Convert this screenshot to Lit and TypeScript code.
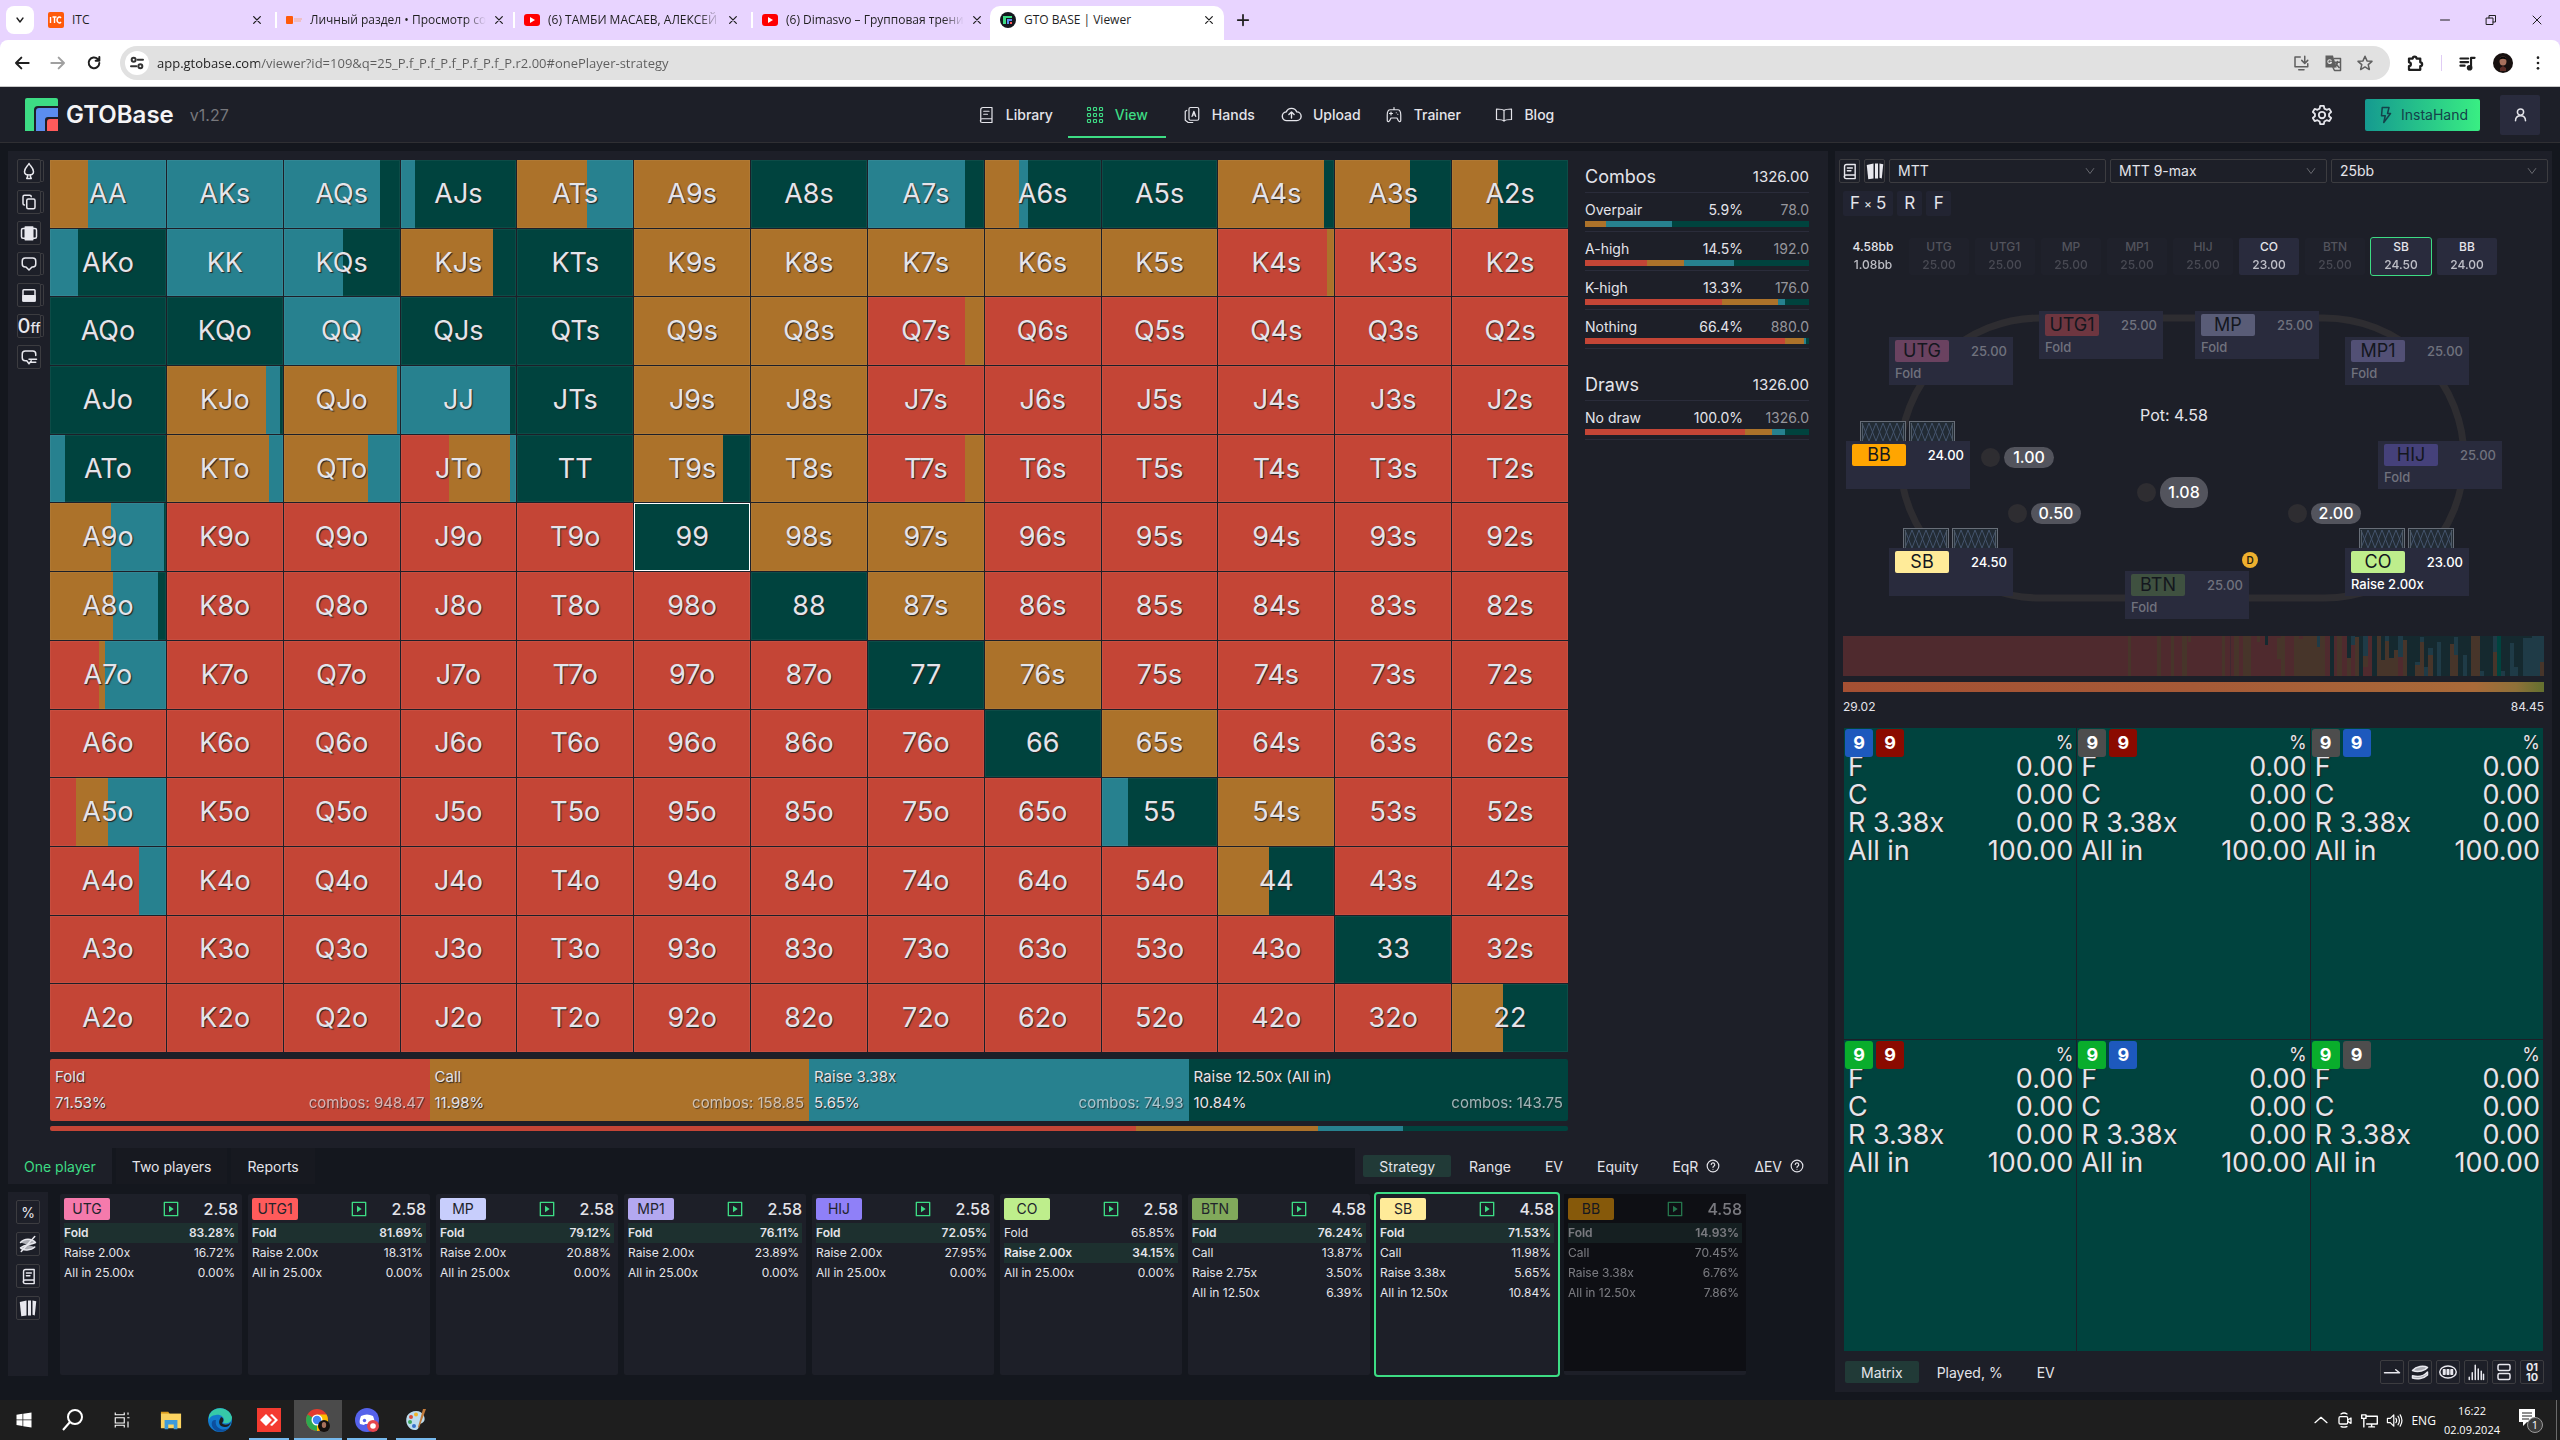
import { LitElement, html, svg, css, nothing } from "lit";
import { customElement, property, state } from "lit/decorators.js";
import { classMap } from "lit/directives/class-map.js";
import { styleMap } from "lit/directives/style-map.js";

const COLORS: Record<string, string> = {
  r: "#c44536",
  o: "#ac722a",
  t: "#27818f",
  g: "#00433e",
};

type Mix = [string, number][];

const mixGradient = (mix: Mix) => {
  let at = 0;
  const stops = mix.map(([c, w]) => {
    const from = at;
    at += w;
    return `${COLORS[c]} ${from}% ${at}%`;
  });
  return `linear-gradient(90deg, ${stops.join(", ")})`;
};

const RANKS = "AKQJT98765432";
const BASE = [
  "otttoogtggoog",
  "gttogooooorrr",
  "ggtggoorrrrrr",
  "gootgoorrrrrr",
  "gooogoorrrrrr",
  "orrrrgoorrrrr",
  "orrrrrgorrrrr",
  "rrrrrrrgorrrr",
  "rrrrrrrrgorrr",
  "rrrrrrrrrgorr",
  "rrrrrrrrrrgrr",
  "rrrrrrrrrrrgr",
  "rrrrrrrrrrrrg",
];
const MIXED: Record<string, Mix> = {
  AA: [["o", 33], ["t", 67]],
  AQs: [["t", 83], ["g", 17]],
  AJs: [["t", 12], ["g", 88]],
  ATs: [["o", 60], ["t", 40]],
  A7s: [["t", 84], ["g", 16]],
  A6s: [["o", 29], ["t", 8], ["g", 63]],
  A4s: [["o", 91], ["g", 9]],
  A3s: [["o", 65], ["g", 35]],
  A2s: [["o", 40], ["g", 60]],
  AKo: [["t", 24], ["g", 76]],
  KQs: [["t", 51], ["g", 49]],
  KJs: [["o", 80], ["g", 20]],
  K4s: [["r", 94], ["o", 6]],
  Q7s: [["r", 84], ["o", 16]],
  KJo: [["o", 85], ["t", 12], ["g", 3]],
  QJo: [["o", 97], ["t", 3]],
  JJ: [["t", 95], ["g", 5]],
  ATo: [["t", 13], ["g", 87]],
  KTo: [["o", 88], ["t", 12]],
  QTo: [["o", 72], ["t", 28]],
  JTo: [["r", 42], ["o", 53], ["t", 5]],
  T9s: [["o", 77], ["g", 23]],
  T7s: [["r", 84], ["o", 16]],
  A9o: [["o", 53], ["t", 45], ["g", 2]],
  A8o: [["o", 54], ["t", 39], ["g", 7]],
  A7o: [["r", 42], ["o", 5], ["t", 53]],
  A5o: [["r", 22], ["o", 28], ["t", 50]],
  A4o: [["r", 77], ["t", 23]],
  "55": [["t", 23], ["g", 77]],
  "44": [["o", 44], ["g", 56]],
  "22": [["o", 44], ["g", 56]],
};

const icon = (body: unknown, size = 20, w = 2) => html`<svg
  width=${size}
  height=${size}
  viewBox="0 0 24 24"
  fill="none"
  stroke="currentColor"
  stroke-width=${w}
  stroke-linecap="round"
  stroke-linejoin="round"
  aria-hidden="true"
>
  ${body}
</svg>`;

const I = {
  book: svg`<path d="M5 20V5a3 3 0 0 1 3-3h12v20H7a2.500 2.500 0 0 1 0-5h13M9 7h7M9 11h5"/>`,
  cards: svg`<g fill="currentColor" stroke="none"><path d="M1 4l9-2v20l-7 1z"/><path d="M12 2h4v20h-4z"/><path d="M18 2l5 1-2 19-3-1z"/></g>`,
  spade: svg`<path d="M12 2c2 4 6 6 6 11a4 4 0 0 1-5 4l2 5H9l2-5a4 4 0 0 1-5-4c0-5 4-7 6-11z"/>`,
  copy: svg`<rect x="9" y="8" width="11" height="13" rx="2"/><path d="M6 16a2 2 0 0 1-2-2V5a2 2 0 0 1 2-2h7a2 2 0 0 1 2 2"/>`,
  carousel: svg`<rect x="2" y="6" width="20" height="13" rx="2"/><rect x="7" y="4" width="10" height="17" fill="currentColor"/>`,
  comment: svg`<path d="M7 4h10a4 4 0 0 1 4 4v4a4 4 0 0 1-4 4h-1l-4 4-4-4H7a4 4 0 0 1-4-4V8a4 4 0 0 1 4-4z"/>`,
  half: svg`<rect x="4" y="5" width="16" height="15" rx="1"/><path d="M4 13h16v7H4z" fill="currentColor"/>`,
  commentMinus: svg`<path d="M12 21l-3-4H7a4 4 0 0 1-4-4V8a4 4 0 0 1 4-4h10a4 4 0 0 1 4 4v2M12 21l3-4M12 15h10M14 19h7"/>`,
  grid: svg`${[4, 12, 20].map((x) => [4, 12, 20].map((y) => svg`<rect x=${x - 2} y=${y - 2} width="4" height="4" rx="1"/>`))}`,
  hands: svg`<rect x="8" y="2" width="13" height="17" rx="2"/><path d="M5 6L3 7v12l4 3h6M12 14l2.500-7 2.500 7M13 12h3"/>`,
  upload: svg`<path d="M7 19a5 5 0 0 1-1-10 6.500 6.500 0 0 1 12 0 5 5 0 0 1 0 10zM12 16v-6M9 12l3-3 3 3"/>`,
  trainer: svg`<path d="M7 5h10c3 0 4 3 4 7v7c0 3-3 2-4-1l-1-2H8l-1 2c-1 3-4 4-4 1v-7c0-4 1-7 4-7zM8 8v4M6 10h4M15 9h.1M17 11h.1M12 2v3"/>`,
  blog: svg`<path d="M12 6c-2-2-6-2-10-2v14c4 0 8 0 10 2 2-2 6-2 10-2V4c-4 0-8 0-10 2zM12 6v14"/>`,
  gear: svg`<circle cx="12" cy="12" r="3.500"/><path d="M10 2h4l.6 3 2.400 1.300 3-1 2 3.500-2.300 2v2.500l2.300 2-2 3.400-3-1-2.400 1.400L14 22h-4l-.6-2.900L7 17.700l-3 1-2-3.400 2.300-2v-2.500L2 8.800l2-3.500 3 1L9.400 5z"/>`,
  bolt: svg`<path d="M7 2h9l-2 8h4L9 22l2-9H6z"/>`,
  user: svg`<circle cx="12" cy="8" r="5"/><path d="M4 22c0-6 4-8 8-8s8 2 8 8"/>`,
  eyeOff: svg`<path d="M2 10c5-6 15-6 20 0-6 3-14 3-20 7 3 4 14 4 19-1" fill="currentColor" fill-opacity=".7"/><path d="M3 22L21 2"/>`,
  play: svg`<rect x="2" y="2" width="20" height="20"/><path d="M9 7l7 5-7 5z" fill="currentColor" stroke="none"/>`,
  arrow: svg`<path d="M2 13h20l-5-4"/>`,
  chips: svg`<path d="M2 10c5-6 15-7 20-4-3 4-12 7-20 4zM2 17c8 2 16 0 20-5v4c-5 5-14 6-20 4z" fill="currentColor" fill-opacity=".7"/>`,
  oval: svg`<ellipse cx="12" cy="12" rx="11" ry="8"/><rect x="6" y="9" width="2" height="6" fill="currentColor"/><rect x="11" y="9" width="2" height="6" fill="currentColor"/><rect x="16" y="9" width="2" height="6" fill="currentColor"/>`,
  bars: svg`<path d="M3 22v-3M7 22V13M11 22V3M15 22V8M19 22V11M22 22v-7"/>`,
  rows: svg`<rect x="4" y="2" width="16" height="8" rx="2"/><rect x="4" y="14" width="16" height="8" rx="2"/>`,
  down: svg`<path d="M3 6l9 12 9-12"/>`,
  close: svg`<path d="M4 4l16 16M20 4L4 20"/>`,
  plus: svg`<path d="M12 3v18M3 12h18"/>`,
  back: svg`<path d="M22 12H3M11 4l-8 8 8 8"/>`,
  forward: svg`<path d="M2 12h19M13 4l8 8-8 8"/>`,
  reload: svg`<path d="M20 12a8 8 0 1 1-2.500-6L20 8.500M20 3v5.500h-5.500"/>`,
  tune: svg`<circle cx="7" cy="7" r="3"/><path d="M13 7h8M3 17h8"/><circle cx="17" cy="17" r="3"/>`,
  install: svg`<path d="M11 4H4v13h17v-4M9 21h7M17 3v9M13 8.500l4 4 4-4"/>`,
  translate: svg`<path d="M2 2h10l5 16H2z" fill="currentColor" stroke="none"/><path d="M14 6h8v16h-8l-2-4M15 11h6M18 10c0 3-1 5-4 7M16 13l4 5"/><path d="M9.500 8.500A2.500 2.500 0 1 0 10 11H8" stroke="#e1e1e1" stroke-width="1.500"/>`,
  star: svg`<path d="M12 3l2.700 6.200 6.600.6-5 4.400 1.500 6.500L12 17.300l-5.800 3.400 1.500-6.500-5-4.400 6.600-.6z"/>`,
  puzzle: svg`<path d="M4 6h5a2.500 2.500 0 0 1 5 0h5v5a2.500 2.500 0 0 1 0 5v5H4v-5a2.500 2.500 0 0 0 0-5z"/>`,
  music: svg`<path d="M2 5h11M2 10h11M2 15h6M17 17V4h5" /><circle cx="15" cy="18" r="2.500" fill="currentColor"/>`,
  dots: svg`<g fill="currentColor" stroke="none"><circle cx="12" cy="4" r="2"/><circle cx="12" cy="12" r="2"/><circle cx="12" cy="20" r="2"/></g>`,
  minimize: svg`<path d="M3 12h18"/>`,
  restore: svg`<path d="M3 8h13v13H3zM8 8V3h13v13h-5"/>`,
  help: svg`<circle cx="12" cy="12" r="10"/><path d="M9 9.500a3 3 0 1 1 4 3c-1 .5-1 1-1 2M12 17.500v.1"/>`,
};

const base = css`
  :host {
    display: block;
    box-sizing: border-box;
    font-family: Inter, "Liberation Sans", sans-serif;
    font-optical-sizing: none;
    color: #e4e4ea;
  }
  * {
    box-sizing: border-box;
  }
  svg {
    display: block;
    flex: none;
  }
  button {
    font: inherit;
    color: inherit;
    background: none;
    border: 0;
    padding: 0;
    margin: 0;
  }
  a {
    color: inherit;
    text-decoration: none;
  }
  table {
    border-collapse: collapse;
    width: 100%;
  }
  td,
  th {
    padding: 0;
    font-weight: inherit;
    text-align: left;
  }
  .num {
    text-align: right;
  }
  .tool {
    width: 24px;
    height: 24px;
    display: grid;
    place-items: center;
    border: 1px solid #3c3c40;
    border-radius: 2px;
    color: #e8e8ee;
  }
`;

@customElement("browser-bar")
export class BrowserBar extends LitElement {
  static styles = [
    base,
    css`
      :host {
        background: #e8d4ff;
        color: #1f1f1f;
        font-family: "Open Sans", "Noto Sans", sans-serif;
      }
      .tabs {
        display: flex;
        height: 40px;
        align-items: center;
        padding-left: 6px;
      }
      .search {
        width: 28px;
        height: 28px;
        background: #fff;
        border-radius: 8px;
        display: grid;
        place-items: center;
        margin-right: 4px;
      }
      .tab {
        width: 238px;
        height: 34px;
        display: flex;
        align-items: center;
        gap: 8px;
        padding: 0 14px 0 10px;
        font-size: 12px;
        line-height: 16px;
      }
      .tab.active {
        background: #fff;
        align-self: flex-end;
        border-radius: 10px 10px 0 0;
        width: 234px;
        padding: 0 10px 6px;
      }
      .tab .label {
        flex: 1;
        white-space: nowrap;
      }
      .tab.cut .label {
        mask-image: linear-gradient(90deg, #000 88%, transparent);
      }
      .sep {
        width: 2px;
        height: 16px;
        margin: 0 -1px;
        background: #fff;
      }
      .new {
        margin-left: 12px;
      }
      .win {
        margin-left: auto;
        display: flex;
        gap: 34px;
        padding-right: 17px;
      }
      .nav {
        height: 46px;
        background: #fff;
        border-radius: 8px 8px 0 0;
        display: flex;
        align-items: center;
        padding: 0 14px;
      }
      .moves {
        display: flex;
        gap: 20px;
        width: 106px;
      }
      .fade {
        color: #a0a0a0;
      }
      .url {
        flex: 1;
        height: 34px;
        display: flex;
        align-items: center;
        gap: 8px;
        background: #e1e1e1;
        border-radius: 17px;
        padding: 0 16px 0 5px;
        color: #5f5f5f;
      }
      .site {
        width: 24px;
        height: 24px;
        border-radius: 12px;
        background: #fff;
        display: grid;
        place-items: center;
        color: #333;
      }
      .url input {
        flex: 1;
        min-width: 0;
        border: 0;
        padding: 0;
        outline: 0;
        font: 13px/20px "Open Sans", "Noto Sans", sans-serif;
        color: transparent;
        background: linear-gradient(90deg, #1f1f1f 102px, #5c5c5c 102px);
        background-clip: text;
        -webkit-background-clip: text;
      }
      .marks {
        display: flex;
        gap: 14px;
      }
      .ext {
        display: flex;
        align-items: center;
        gap: 17px;
        padding-left: 16px;
      }
      .bar {
        width: 1px;
        height: 16px;
        background: #e0ccf5;
      }
      .rule {
        height: 1px;
        background: #c8c8c8;
      }
    `,
  ];

  private fav(kind: string) {
    if (kind === "itc")
      return html`<svg width="16" height="16" viewBox="0 0 16 16">
        <rect width="16" height="16" rx="2" fill="#ff5a0a" />
        <path d="M2.500 5v6M4.500 5h4M6.500 5v6M13 6a2.200 3 0 1 0 0 4" stroke="#fff" stroke-width="1.400" fill="none" />
      </svg>`;
    if (kind === "lk")
      return html`<svg width="16" height="16" viewBox="0 0 16 16">
        <rect y="4" width="7" height="8" rx="1" fill="#ff5a0a" />
        <path d="M8 7h8M8 9h7" stroke="#f7a98c" />
      </svg>`;
    if (kind === "yt")
      return html`<svg width="16" height="16" viewBox="0 0 16 16">
        <rect y="2" width="16" height="12" rx="3" fill="#f00" />
        <path d="M6 5l5 3-5 3z" fill="#fff" />
      </svg>`;
    return html`<svg width="16" height="16" viewBox="0 0 16 16">
      <circle cx="8" cy="8" r="8" fill="#14171e" />
      <path d="M3 12V4h9v2H6v6z" fill="#3ddc84" />
      <path d="M7 12V7h5v2H9v3z" fill="#5b8def" />
      <path d="M10 10h2v2h-2z" fill="#ff5b5b" />
    </svg>`;
  }

  render() {
    const tabs = [
      ["itc", "ITC"],
      ["lk", "Личный раздел • Просмотр со"],
      ["yt", "(6) ТАМБИ МАСАЕВ, АЛЕКСЕЙ"],
      ["yt", "(6) Dimasvo – Групповая трени"],
      ["gto", "GTO BASE | Viewer"],
    ];
    return html`
      <div class="tabs">
        <button class="search" aria-label="Search tabs">${icon(I.down, 8, 4)}</button>
        ${tabs.map(
          ([k, t], i) => html`<div class=${classMap({ tab: true, active: i === 4, cut: i > 0 && i < 4 })}>
              ${this.fav(k)}<span class="label">${t}</span>
              <button aria-label="Close tab">${icon(I.close, 10, 3)}</button>
            </div>
            ${i < 3 ? html`<span class="sep"></span>` : nothing}`,
        )}
        <button class="new" aria-label="New tab">${icon(I.plus, 14, 3)}</button>
        <div class="win">
          <button aria-label="Minimize">${icon(I.minimize, 12, 2)}</button>
          <button aria-label="Restore">${icon(I.restore, 12, 2)}</button>
          <button aria-label="Close">${icon(I.close, 12, 2)}</button>
        </div>
      </div>
      <div class="nav">
        <div class="moves">
          <button aria-label="Back">${icon(I.back, 16, 3)}</button>
          <button class="fade" aria-label="Forward">${icon(I.forward, 16, 3)}</button>
          <button aria-label="Reload">${icon(I.reload, 16, 3)}</button>
        </div>
        <div class="url">
          <button class="site" aria-label="Site information">${icon(I.tune, 16, 3)}</button>
          <input
            aria-label="Address"
            spellcheck="false"
            .value=${"app.gtobase.com/viewer?id=109&q=25_P.f_P.f_P.f_P.f_P.f_P.r2.00#onePlayer-strategy"}
          />
          <div class="marks">
            <button aria-label="Install">${icon(I.install, 18, 2)}</button>
            <button aria-label="Translate">${icon(I.translate, 18, 2)}</button>
            <button aria-label="Bookmark">${icon(I.star, 18, 2)}</button>
          </div>
        </div>
        <div class="ext">
          <button aria-label="Extensions">${icon(I.puzzle, 18, 3)}</button>
          <span class="bar"></span>
          <button aria-label="Media">${icon(I.music, 17, 3)}</button>
          <button aria-label="Profile">
            <svg width="20" height="20" viewBox="0 0 20 20">
              <circle cx="10" cy="10" r="10" fill="#17100f" />
              <ellipse cx="10" cy="8" rx="3.500" ry="4.500" fill="#a8705c" />
              <path d="M6 8c0-6 8-6 8 0-1-3-7-3-8 0z" fill="#080606" />
              <path d="M7 15l3-2 3 2v3H7z" fill="#5c2c26" />
            </svg>
          </button>
          <button aria-label="Menu">${icon(I.dots, 16, 2)}</button>
        </div>
      </div>
      <div class="rule"></div>
    `;
  }
}

@customElement("site-header")
export class SiteHeader extends LitElement {
  static styles = [
    base,
    css`
      header {
        height: 56px;
        background: #1d1f28;
        border-bottom: 1px solid #2f2f33;
        display: flex;
        justify-content: space-between;
        align-items: center;
        padding: 0 20px 0 25px;
      }
      .brand {
        display: flex;
        align-items: center;
        gap: 8px;
      }
      .name {
        font-size: 24px;
        line-height: 32px;
        font-weight: 600;
        color: #f4f4f6;
      }
      .ver {
        font-size: 16px;
        color: #77777c;
        margin-left: 8px;
      }
      nav {
        display: flex;
        gap: 4px;
        height: 100%;
      }
      nav a {
        width: 98px;
        display: flex;
        justify-content: center;
        align-items: center;
        gap: 11px;
        font-size: 14px;
        font-weight: 500;
        margin-bottom: 4px;
        border-bottom: 2px solid transparent;
        padding-top: 6px;
      }
      nav a.on {
        color: #3ddc84;
        border-color: #3ddc84;
      }
      .right {
        display: flex;
        align-items: center;
      }
      .insta {
        width: 115px;
        height: 32px;
        display: flex;
        justify-content: center;
        align-items: center;
        gap: 6px;
        margin: 0 20px 0 32px;
        border-radius: 2px;
        background: linear-gradient(90deg, #159a90, #39ee83);
        color: #14424a;
        font-size: 14px;
      }
      .user {
        width: 40px;
        height: 40px;
        background: #292b3d;
        border-radius: 2px;
        display: grid;
        place-items: center;
      }
    `,
  ];
  render() {
    const items: [string, unknown][] = [
      ["Library", I.book],
      ["View", I.grid],
      ["Hands", I.hands],
      ["Upload", I.upload],
      ["Trainer", I.trainer],
      ["Blog", I.blog],
    ];
    return html`<header>
      <div class="brand">
        <svg width="33" height="33" viewBox="0 0 33 33">
          <path d="M2 0h29a2 2 0 0 1 2 2v6H13q-4 0-4 4v21H0V2a2 2 0 0 1 2-2z" fill="#3ddc84" />
          <path d="M11 33V13q0-3 3-3h19v9H23q-3 0-3 3v11z" fill="#5b8def" />
          <path d="M22 33V24q0-3 3-3h8v12z" fill="#ff5b5b" />
        </svg>
        <span class="name">GTOBase</span><span class="ver">v1.27</span>
      </div>
      <nav>
        ${items.map(([t, i]) => html`<a href="#${t}" class=${t === "View" ? "on" : ""}>${icon(i, t === "Upload" ? 21 : 18, 1.6)}${t}</a>`)}
      </nav>
      <div class="right">
        <button aria-label="Settings">${icon(I.gear, 22, 2)}</button>
        <button class="insta">${icon(I.bolt, 18, 2)}InstaHand</button>
        <button class="user" aria-label="Account">${icon(I.user, 15, 2.4)}</button>
      </div>
    </header>`;
  }
}

@customElement("hand-matrix")
export class HandMatrix extends LitElement {
  @state() private selected = "99";
  static styles = [
    base,
    css`
      :host {
        display: grid;
        grid-template-columns: repeat(13, minmax(0, 1fr));
        grid-template-rows: repeat(13, minmax(0, 1fr));
        gap: 1px;
        flex: 1;
        min-height: 0;
      }
      button {
        font-size: 27px;
        line-height: 32px;
        color: #e4e4ea;
        text-shadow: 1px 1px 1px #222;
        box-shadow: inset 0 0 0 1px rgba(255, 255, 255, 0.05);
      }
      .sel {
        box-shadow: inset 0 0 0 1px #fff;
      }
    `,
  ];
  render() {
    const cells = [];
    for (let r = 0; r < 13; r++)
      for (let c = 0; c < 13; c++) {
        const hand = r === c ? RANKS[r] + RANKS[r] : c > r ? RANKS[r] + RANKS[c] + "s" : RANKS[c] + RANKS[r] + "o";
        const mix: Mix = MIXED[hand] ?? [[BASE[r][c], 100]];
        cells.push(html`<button
          class=${hand === this.selected ? "sel" : ""}
          style=${styleMap({ background: mixGradient(mix) })}
          @click=${() => (this.selected = hand)}
        >
          ${hand}
        </button>`);
      }
    return cells;
  }
}

@customElement("range-stats")
export class RangeStats extends LitElement {
  static styles = [
    base,
    css`
      :host {
        width: 224px;
        flex: none;
      }
      table {
        table-layout: fixed;
        border-collapse: separate;
        border-spacing: 0;
        margin-bottom: 18px;
        font-size: 14px;
      }
      .c2 {
        width: 60px;
      }
      .c3 {
        width: 66px;
      }
      .head > * {
        height: 34px;
        border-bottom: 1px solid #2a2c3a;
      }
      .head th {
        font-size: 18px;
        padding-top: 1px;
      }
      .head td {
        font-size: 15px;
        padding-top: 1px;
      }
      .line td {
        height: 28px;
        line-height: 18px;
        vertical-align: bottom;
        padding-bottom: 2px;
      }
      .bar td {
        height: 11px;
        border-bottom: 1px solid #2a2c3a;
        vertical-align: top;
      }
      .fill {
        height: 6px;
      }
      .dim {
        color: #96969c;
      }
    `,
  ];
  private block(title: string, rows: [string, string, string, Mix][]) {
    return html`<table>
      <colgroup>
        <col />
        <col class="c2" />
        <col class="c3" />
      </colgroup>
      <tbody>
        <tr class="head">
          <th>${title}</th>
          <td class="num" colspan="2">1326.00</td>
        </tr>
        ${rows.map(
          ([n, p, c, mix]) => html`<tr class="line">
              <td>${n}</td>
              <td class="num">${p}</td>
              <td class="num dim">${c}</td>
            </tr>
            <tr class="bar">
              <td colspan="3"><div class="fill" style=${styleMap({ background: mixGradient(mix) })}></div></td>
            </tr>`,
        )}
      </tbody>
    </table>`;
  }
  render() {
    return html`${this.block("Combos", [
      ["Overpair", "5.9%", "78.0", [["o", 9.4], ["t", 29.5], ["g", 61.1]]],
      ["A-high", "14.5%", "192.0", [["r", 27.7], ["o", 16.5], ["t", 22.3], ["g", 33.5]]],
      ["K-high", "13.3%", "176.0", [["r", 61.2], ["o", 25], ["t", 3.1], ["g", 10.7]]],
      ["Nothing", "66.4%", "880.0", [["r", 89.3], ["o", 8.5], ["t", 0.9], ["g", 1.3]]],
    ])}
    ${this.block("Draws", [["No draw", "100.0%", "1326.0", [["r", 71.4], ["o", 12.1], ["t", 5.8], ["g", 10.7]]]])}`;
  }
}

interface Player {
  name: string;
  color: string;
  pot: string;
  pick: number;
  rows: [string, string][];
}

const open = (a: string, b: string): [string, string][] => [
  ["Fold", a],
  ["Raise 2.00x", b],
  ["All in 25.00x", "0.00%"],
];
const PLAYERS: Player[] = [
  { name: "UTG", color: "#f57aac", pot: "2.58", pick: 0, rows: open("83.28%", "16.72%") },
  { name: "UTG1", color: "#ff5b5b", pot: "2.58", pick: 0, rows: open("81.69%", "18.31%") },
  { name: "MP", color: "#c8cefc", pot: "2.58", pick: 0, rows: open("79.12%", "20.88%") },
  { name: "MP1", color: "#b3a8f0", pot: "2.58", pick: 0, rows: open("76.11%", "23.89%") },
  { name: "HIJ", color: "#8f80f8", pot: "2.58", pick: 0, rows: open("72.05%", "27.95%") },
  { name: "CO", color: "#beee8c", pot: "2.58", pick: 1, rows: open("65.85%", "34.15%") },
  {
    name: "BTN",
    color: "#81a95b",
    pot: "4.58",
    pick: 0,
    rows: [["Fold", "76.24%"], ["Call", "13.87%"], ["Raise 2.75x", "3.50%"], ["All in 12.50x", "6.39%"]],
  },
  {
    name: "SB",
    color: "#ffeb99",
    pot: "4.58",
    pick: 0,
    rows: [["Fold", "71.53%"], ["Call", "11.98%"], ["Raise 3.38x", "5.65%"], ["All in 12.50x", "10.84%"]],
  },
  {
    name: "BB",
    color: "#ffa500",
    pot: "4.58",
    pick: 0,
    rows: [["Fold", "14.93%"], ["Call", "70.45%"], ["Raise 3.38x", "6.76%"], ["All in 12.50x", "7.86%"]],
  },
];

@customElement("player-card")
export class PlayerCard extends LitElement {
  @property({ attribute: false }) player!: Player;
  @property({ type: Boolean, reflect: true }) current = false;
  @property({ type: Boolean, reflect: true }) pending = false;
  static styles = [
    base,
    css`
      :host {
        width: 182px;
        height: 181px;
        background: #1d1f28;
        border-radius: 2px;
      }
      :host([current]) {
        outline: 2px solid #3ddc84;
      }
      .body {
        height: 177px;
        padding: 4px;
      }
      :host([pending]) .body {
        background: #0e0f14;
      }
      :host([pending]) .top,
      :host([pending]) table {
        opacity: 0.5;
      }
      .top {
        display: flex;
        align-items: center;
        margin-bottom: 3px;
      }
      .badge {
        width: 46px;
        height: 22px;
        line-height: 22px;
        border-radius: 2px;
        text-align: center;
        font-size: 14px;
        color: #22242c;
        margin-right: auto;
      }
      .go {
        color: #3ddc84;
      }
      .pot {
        width: 59px;
        text-align: right;
        font-size: 16px;
        line-height: 22px;
        font-weight: 500;
      }
      table {
        font-size: 12px;
        line-height: 20px;
      }
      td.num {
        padding-right: 3px;
      }
      .pick {
        background: #1d302f;
        font-weight: 600;
      }
    `,
  ];
  render() {
    const p = this.player;
    return html`<div class="body">
      <div class="top">
        <span class="badge" style=${styleMap({ background: p.color })}>${p.name}</span>
        <button class="go" aria-label="Play as ${p.name}">${icon(I.play, 16, 2)}</button>
        <span class="pot">${p.pot}</span>
      </div>
      <table>
        ${p.rows.map(
          ([a, b], i) => html`<tr class=${i === p.pick ? "pick" : ""}>
            <td>${a}</td>
            <td class="num">${b}</td>
          </tr>`,
        )}
      </table>
    </div>`;
  }
}

interface Seat {
  name: string;
  stack: string;
  act: string;
  bg: string;
  x: number;
  y: number;
  live?: boolean;
}

const SEATS: Seat[] = [
  { name: "UTG", stack: "25.00", act: "Fold", bg: "#6a4260", x: 46, y: 37 },
  { name: "UTG1", stack: "25.00", act: "Fold", bg: "#6e3640", x: 196, y: 11 },
  { name: "MP", stack: "25.00", act: "Fold", bg: "#595c77", x: 352, y: 11 },
  { name: "MP1", stack: "25.00", act: "Fold", bg: "#525075", x: 502, y: 37 },
  { name: "HIJ", stack: "25.00", act: "Fold", bg: "#45417a", x: 535, y: 141 },
  { name: "CO", stack: "23.00", act: "Raise 2.00x", bg: "#beee8c", x: 502, y: 248, live: true },
  { name: "BTN", stack: "25.00", act: "Fold", bg: "#3f5140", x: 282, y: 271 },
  { name: "SB", stack: "24.50", act: "", bg: "#ffeb99", x: 46, y: 248, live: true },
  { name: "BB", stack: "24.00", act: "", bg: "#ffa500", x: 3, y: 141, live: true },
];

const BETS = [
  { v: "1.00", x: 138, y: 147 },
  { v: "0.50", x: 165, y: 203 },
  { v: "2.00", x: 445, y: 203 },
];

@customElement("poker-table")
export class PokerTable extends LitElement {
  static styles = [
    base,
    css`
      :host {
        position: relative;
        height: 320px;
      }
      .felt,
      .seat,
      .bet,
      .pot,
      .dealer,
      .backs {
        position: absolute;
      }
      .felt {
        left: 53px;
        top: 14px;
      }
      .seat {
        width: 124px;
        height: 48px;
        padding: 3px 6px;
        background: #292b3d;
        color: #70727d;
        font-size: 13px;
        font-weight: 500;
      }
      .seat.live {
        color: #fff;
      }
      .row {
        display: flex;
        justify-content: space-between;
        align-items: center;
      }
      .badge {
        width: 54px;
        height: 22px;
        line-height: 22px;
        text-align: center;
        font-size: 18px;
        font-weight: 400;
        border-radius: 2px;
        color: #14171e;
      }
      .act {
        line-height: 22px;
      }
      .backs {
        display: flex;
        gap: 3px;
      }
      .bet {
        display: flex;
        align-items: center;
        gap: 4px;
        color: #fff;
        font-size: 16px;
        font-weight: 500;
      }
      .dot {
        width: 19px;
        height: 19px;
        border-radius: 10px;
        background: #2e2d31;
      }
      .pill {
        width: 50px;
        height: 21px;
        line-height: 21px;
        text-align: center;
        border-radius: 11px;
        background: #53545d;
      }
      .bet.main {
        left: 294px;
        top: 177px;
      }
      .main .pill {
        width: 48px;
        height: 31px;
        line-height: 31px;
        border-radius: 15px;
      }
      .pot {
        left: 297px;
        top: 105px;
        font-size: 16px;
        line-height: 20px;
      }
      .dealer {
        left: 399px;
        top: 252px;
        width: 16px;
        height: 16px;
        border-radius: 8px;
        background: #efb02e;
        color: #26200f;
        font-size: 10px;
        line-height: 16px;
        font-weight: 600;
        text-align: center;
      }
    `,
  ];
  private back() {
    const xs = [0, 1, 2, 3, 4, 5];
    return html`<svg width="46" height="20" viewBox="0 0 46 20" fill="none">
      <rect x=".5" y=".5" width="45" height="20" fill="#222b34" stroke="#686e78" />
      ${xs.map((i) => svg`<path d="M${2 + i * 7} 2l7 18M${9 + i * 7} 2l-7 18" stroke="#44546c"/>`)}
      <path d="M2.500 2v18M43.500 2v18" stroke="#4f5a66" />
    </svg>`;
  }
  render() {
    return html`
      <svg class="felt" width="572" height="288" viewBox="0 0 572 288" fill="none">
        <rect x="4" y="4" width="564" height="280" rx="140" stroke="#2e2d31" stroke-width="7" />
      </svg>
      ${SEATS.map(
        (s) => html`${s.live
            ? html`<div class="backs" style=${styleMap({ left: `${s.x + 14}px`, top: `${s.y - 20}px` })}>
                ${this.back()}${this.back()}
              </div>`
            : nothing}
          <div class=${classMap({ seat: true, live: !!s.live })} style=${styleMap({ left: `${s.x}px`, top: `${s.y}px` })}>
            <div class="row">
              <span class="badge" style=${styleMap({ background: s.bg })}>${s.name}</span><span>${s.stack}</span>
            </div>
            <div class="act">${s.act}</div>
          </div>`,
      )}
      ${BETS.map(
        (b) => html`<div class="bet" style=${styleMap({ left: `${b.x}px`, top: `${b.y}px` })}>
          <span class="dot"></span><span class="pill">${b.v}</span>
        </div>`,
      )}
      <div class="bet main"><span class="dot"></span><span class="pill">1.08</span></div>
      <div class="pot">Pot: 4.58</div>
      <div class="dealer">D</div>
    `;
  }
}

/* Columns of the equity histogram: x, width, top, bottom, colour key. */
const HIST: [number, number, number, number, string][] = [
  [0, 1030, 0, 120, "r"],
  [291, 1, 0, 120, "l"], [355, 1, 0, 120, "l"], [482, 1, 0, 120, "l"], [664, 1, 0, 120, "l"], [755, 1, 0, 120, "l"], [819, 1, 0, 120, "l"],
  [602, 8, 0, 120, "o"], [665, 8, 0, 120, "o"], [693, 8, 0, 120, "o"], [718, 9, 0, 120, "o"], [729, 7, 0, 18, "o"],
  [801, 8, 0, 120, "o"], [828, 9, 0, 120, "o"], [847, 17, 0, 120, "o"], [875, 7, 0, 18, "o"], [892, 8, 0, 26, "g"],
  [919, 8, 6, 69, "o"], [927, 9, 0, 120, "o"], [955, 9, 0, 120, "o"], [964, 9, 8, 120, "o"], [973, 29, 0, 120, "o"],
  [1002, 8, 0, 34, "t"], [1002, 8, 34, 120, "o"], [1010, 9, 0, 120, "o"], [1030, 453, 0, 120, "g"],
  [1038, 28, 0, 120, "r"], [1046, 9, 0, 120, "o"], [1066, 8, 67, 120, "o"], [1074, 9, 0, 28, "t"], [1074, 9, 28, 120, "r"],
  [1083, 9, 4, 120, "o"], [1101, 9, 0, 60, "t"], [1101, 9, 60, 92, "o"], [1101, 9, 92, 120, "r"], [1110, 10, 0, 120, "r"],
  [1129, 9, 0, 120, "o"], [1138, 9, 72, 120, "o"], [1147, 9, 0, 15, "t"], [1147, 9, 15, 120, "o"], [1156, 9, 66, 120, "o"],
  [1165, 9, 42, 120, "o"], [1174, 10, 0, 64, "t"], [1174, 10, 64, 120, "r"], [1184, 9, 12, 120, "o"], [1210, 10, 79, 87, "t"],
  [1210, 10, 87, 120, "o"], [1220, 9, 4, 17, "t"], [1220, 9, 17, 120, "o"], [1229, 8, 94, 120, "t"], [1237, 11, 37, 57, "t"],
  [1237, 11, 57, 120, "o"], [1256, 9, 18, 120, "t"], [1284, 8, 24, 120, "o"], [1292, 9, 4, 58, "t"], [1292, 9, 58, 120, "o"],
  [1311, 9, 58, 120, "t"], [1328, 19, 0, 120, "o"], [1347, 9, 105, 120, "t"], [1375, 8, 0, 48, "t"], [1375, 8, 48, 120, "o"],
  [1383, 9, 0, 120, "G"], [1392, 9, 105, 120, "t"], [1411, 9, 21, 120, "t"], [1420, 9, 93, 120, "t"], [1438, 19, 6, 120, "t"],
  [1457, 26, 0, 120, "t"], [1475, 8, 79, 120, "o"],
];
const HIST_COLORS: Record<string, string> = { r: "#4f2a2e", o: "#47352a", t: "#1f3b47", g: "#15292f", G: "#00433e", l: "#402830" };

@customElement("side-panel")
export class SidePanel extends LitElement {
  static styles = [
    base,
    css`
      :host {
        display: flex;
        flex-direction: column;
        background: #1d1f28;
        padding: 8px 8px;
        min-width: 0;
      }
      .filters {
        display: flex;
        gap: 4px;
        margin: 0 -4px;
      }
      .filters .tool {
        width: 21px;
      }
      .pick {
        flex: 1;
        display: grid;
        height: 24px;
      }
      .pick > * {
        grid-area: 1 / 1;
      }
      select {
        appearance: none;
        width: 100%;
        background: transparent;
        border: 1px solid #3c3c40;
        border-radius: 2px;
        color: #e4e4ea;
        font: 14px/20px Inter, "Liberation Sans", sans-serif;
        padding: 0 8px;
      }
      .pick svg {
        justify-self: end;
        align-self: center;
        margin-right: 11px;
        color: #77787e;
        pointer-events: none;
      }
      .line {
        display: flex;
        gap: 4px;
        margin-top: 8px;
      }
      .line button {
        height: 25px;
        min-width: 25px;
        padding: 0 7px;
        display: flex;
        gap: 4px;
        align-items: center;
        justify-content: center;
        background: #222432;
        border-radius: 2px;
        font-size: 17px;
        line-height: 25px;
      }
      .x {
        font-size: 12px;
      }
      .stacks {
        display: flex;
        gap: 6px;
        margin-top: 22px;
        font-size: 12px;
        font-weight: 500;
        text-align: center;
      }
      .stacks > * {
        width: 60px;
        height: 37px;
        border-radius: 2px;
        background: #1f212b;
        color: #53545d;
        line-height: 19px;
        display: flex;
        flex-direction: column;
        align-items: center;
      }
      .stacks .total {
        background: none;
        color: #e4e4ea;
      }
      .stacks .in {
        background: #292b3d;
        color: #e4e4ea;
      }
      .stacks .sub {
        opacity: 0.8;
      }
      .stacks > * span:first-child {
        line-height: 17px;
      }
      .stacks .cur {
        outline: 1px solid #3ddc84;
      }
      poker-table {
        margin-top: 25px;
      }
      .hist {
        width: 100%;
        height: 40px;
        margin-top: 16px;
      }
      .heat {
        height: 10px;
        margin-top: 6px;
        background: linear-gradient(90deg, #a55033, #a65a37 50%, #a96a39 90%, #8f7139 96%, #63702f);
      }
      .ends {
        display: flex;
        justify-content: space-between;
        font-size: 12px;
        line-height: 16px;
        margin: 7px 0 13px;
      }
      .combos {
        flex: 1;
        min-height: 0;
        display: grid;
        grid-template-columns: repeat(3, minmax(0, 1fr));
        grid-template-rows: repeat(2, minmax(0, 1fr));
        gap: 1px;
        margin: 0 1px;
      }
      .combo {
        background: #00433e;
        padding: 1px 3px 0 1px;
        text-shadow: 1px 1px 1px #222;
      }
      .suits {
        display: flex;
        gap: 3px;
        height: 24px;
        position: relative;
      }
      .suit {
        width: 28px;
        height: 28px;
        flex: none;
        line-height: 27px;
        text-align: center;
        border-radius: 3px;
        font-size: 18px;
        font-weight: 700;
        color: #fff;
        text-shadow: none;
      }
      .pct {
        margin-left: auto;
        font-size: 18px;
        line-height: 28px;
      }
      .combo table {
        font-size: 27px;
        line-height: 28px;
      }
      .combo th {
        padding-left: 3px;
      }
      .foot {
        display: flex;
        align-items: center;
        height: 24px;
        margin-top: 9px;
        font-size: 14px;
        gap: 4px;
      }
      .modes {
        display: flex;
        gap: 2px;
        margin: 0 auto 0 2px;
      }
      .mode {
        height: 22px;
        padding: 0 16px;
        border-radius: 2px;
      }
      .mode.on {
        background: #213a37;
      }
      .bin {
        font-size: 11px;
        line-height: 10px;
        font-weight: 700;
      }
    `,
  ];
  private select(label: string, options: string[]) {
    return html`<label class="pick">
      <select aria-label=${label}>
        ${options.map((o) => html`<option>${o}</option>`)}
      </select>
      ${icon(I.down, 10, 2)}
    </label>`;
  }
  render() {
    const S: Record<string, string> = { b: "#1d59bd", r: "#8b0a00", k: "#4d4d4d", g: "#09ad2c" };
    const seats = ["UTG", "UTG1", "MP", "MP1", "HIJ", "CO", "BTN", "SB", "BB"];
    const stack: Record<string, string> = { CO: "23.00", SB: "24.50", BB: "24.00" };
    return html`
      <div class="filters">
        <button class="tool" aria-label="Library">${icon(I.book, 17, 2)}</button>
        <button class="tool" aria-label="Hands">${icon(I.cards, 18, 2)}</button>
        ${this.select("Game", ["MTT"])}${this.select("Table", ["MTT 9-max"])}${this.select("Stack", ["25bb"])}
      </div>
      <div class="line">
        <button>F<span class="x">×</span>5</button><button>R</button><button>F</button>
      </div>
      <div class="stacks">
        <div class="total"><span>4.58bb</span><span class="sub">1.08bb</span></div>
        ${seats.map(
          (s) => html`<button class=${classMap({ in: s in stack, cur: s === "SB" })}>
            <span>${s}</span><span class="sub">${stack[s] ?? "25.00"}</span>
          </button>`,
        )}
      </div>
      <poker-table></poker-table>
      <svg class="hist" viewBox="0 0 1483 120" preserveAspectRatio="none" shape-rendering="crispEdges">
        ${HIST.map(([x, w, a, b, c]) => svg`<rect x=${x} y=${a} width=${w} height=${b - a} fill=${HIST_COLORS[c]}/>`)}
      </svg>
      <div class="heat"></div>
      <div class="ends"><span>29.02</span><span>84.45</span></div>
      <div class="combos">
        ${["br", "kr", "kb", "gr", "gb", "gk"].map(
          (p) => html`<div class="combo">
            <div class="suits">
              ${[...p].map((c) => html`<span class="suit" style=${styleMap({ background: S[c] })}>9</span>`)}
              <span class="pct">%</span>
            </div>
            <table>
              ${[
                ["F", "0.00"],
                ["C", "0.00"],
                ["R 3.38x", "0.00"],
                ["All in", "100.00"],
              ].map(([a, b]) => html`<tr><th>${a}</th><td class="num">${b}</td></tr>`)}
            </table>
          </div>`,
        )}
      </div>
      <div class="foot">
        <div class="modes">
          <button class="mode on">Matrix</button><button class="mode">Played, %</button><button class="mode">EV</button>
        </div>
        <button class="tool" aria-label="Line">${icon(I.arrow, 18, 2)}</button>
        <button class="tool" aria-label="Chips">${icon(I.chips, 18, 2)}</button>
        <button class="tool" aria-label="Table">${icon(I.oval, 18, 2)}</button>
        <button class="tool" aria-label="Chart">${icon(I.bars, 18, 2)}</button>
        <button class="tool" aria-label="Rows">${icon(I.rows, 18, 2)}</button>
        <button class="tool bin" aria-label="Numbers"><span>01<br />10</span></button>
      </div>
    `;
  }
}

@customElement("task-bar")
export class TaskBar extends LitElement {
  static styles = [
    base,
    css`
      :host {
        height: 40px;
        background: #1e1e1e;
        display: flex;
        font-family: "Open Sans", "Noto Sans", sans-serif;
        color: #fff;
      }
      .app {
        width: 48px;
        height: 40px;
        display: grid;
        place-items: center;
        border-bottom: 2px solid transparent;
        border-top: 2px solid transparent;
        margin-right: 1px;
      }
      .run {
        background: linear-gradient(#76b9ed, #76b9ed) 50% 100% / 40px 2px no-repeat border-box;
      }
      .active {
        background: #4b4b4b;
        border-top-color: #4b4b4b;
        border-bottom-color: #76b9ed;
      }
      .tray {
        margin-left: auto;
        display: flex;
        align-items: center;
        gap: 8px;
        font-size: 12px;
      }
      .clock {
        font-size: 11px;
        text-align: center;
        line-height: 19px;
        margin-right: 10px;
      }
      .edge {
        width: 1px;
        height: 40px;
        background: #6a6a6a;
        margin: 0 3px 0 4px;
      }
    `,
  ];
  render() {
    const box = (c: unknown, s = 24) => html`<svg width=${s} height=${s} viewBox="0 0 24 24" fill="none">${c}</svg>`;
    return html`
      <button class="app" aria-label="Start">
        ${box(svg`<path d="M2 5l8-1.200v7.500H2zM11 3.600L22 2v9.300H11zM2 12.400h8V20l-8-1.200zM11 12.400h11V22l-11-1.700z" fill="#fff"/>`, 18)}
      </button>
      <button class="app" aria-label="Search">
        ${box(svg`<circle cx="14" cy="9" r="7" stroke="#fff" stroke-width="2"/><path d="M9 14l-7 8" stroke="#fff" stroke-width="2"/>`)}
      </button>
      <button class="app" aria-label="Task view">
        ${box(svg`<path d="M3 2v3h12V2M3 9h12v7H3zM3 22v-3h12v3M20 2v3M20 14v8M19 9h3" stroke="#fff" stroke-width="1.500"/>`, 18)}
      </button>
      <button class="app" aria-label="Explorer">
        ${box(svg`<path d="M1 3h8l2 3h-10z" fill="#d99b1c"/><path d="M1 5h22v16H1z" fill="#fbd360"/><path d="M5 12h14v10h-4v-5H9v5H5z" fill="#3c9bdc"/>`, 22)}
      </button>
      <button class="app" aria-label="Edge">
        ${box(svg`<circle cx="12" cy="12" r="12" fill="#1279cc"/><path d="M1 8C4-2 20-3 24 9c0 6-5 7-9 6 3-5-2-9-7-8-4 0-7 3-7 5z" fill="#36c9a8"/><path d="M8 12c-2 7 6 12 13 8-4 4-10 5-14 2-5-4-4-11 1-10z" fill="#0c4f9e"/><path d="M13 9c3 1 3 4 1 6 1 2 6 3 9-1-1 3-3 5-6 5-5 0-8-4-4-10z" fill="#1e1e1e"/>`)}
      </button>
      <button class="app run" aria-label="AnyDesk">
        ${box(svg`<rect width="24" height="24" fill="#f43b30"/><path d="M9 6l6 6-6 6-6-6zM13 7l2-1 6 6-6 6-2-1 5-5z" fill="#fff"/>`)}
      </button>
      <button class="app active" aria-label="Chrome">
        ${box(svg`<circle cx="11" cy="12" r="11" fill="#e33b2e"/><path d="M11 12L1.500 6.500A11 11 0 0 0 11 23z" fill="#2da94f"/><path d="M11 12h11a11 11 0 0 1-11 11z" fill="#fdbd00"/><path d="M11 6.500h9.500A11 11 0 0 1 21 16l-8 2z" fill="#fdbd00"/><circle cx="11" cy="12" r="5.500" fill="#fff"/><circle cx="11" cy="12" r="4.200" fill="#4285f4"/><circle cx="18" cy="18" r="6" fill="#15100f"/><ellipse cx="18" cy="17" rx="2.200" ry="3" fill="#a8705c"/>`)}
      </button>
      <button class="app run" aria-label="Discord">
        ${box(svg`<circle cx="12" cy="12" r="12" fill="#5562ea"/><path d="M6 8c4-2 8-2 12 0 1 3 2 5 1 8l-4 1-1-1h-4l-1 1-4-1c-1-3 0-5 1-8z" fill="#fff"/><circle cx="9.500" cy="12.500" r="1.700" fill="#5562ea"/><circle cx="18" cy="18" r="6" fill="#e5454d"/><circle cx="18" cy="18" r="2.800" fill="#fff"/>`)}
      </button>
      <button class="app run" aria-label="Paint">
        ${box(svg`<path d="M3 8c4-6 14-7 17 0 2 5-1 7-4 8-2 1 0 5-4 6-6 1-12-6-9-14z" fill="#bcdcee"/><circle cx="7" cy="9" r="2" fill="#d84a38"/><circle cx="12" cy="6.500" r="2" fill="#eeb52a"/><circle cx="6" cy="14" r="2" fill="#3ba55c"/><circle cx="10" cy="18" r="2" fill="#3871c9"/><path d="M22 1l-7 19-1-1 5-18z" fill="#c07a3a"/>`)}
      </button>
      <div class="tray">
        ${icon(svg`<path d="M3 16l9-8 9 8"/>`, 16, 2)}
        ${icon(svg`<rect x="3" y="7" width="13" height="11" rx="2"/><path d="M16 12l5-3v8l-5-3M6 3c3-2 6-2 9 0M6 22c3 1 6 1 9 0"/>`, 16, 2)}
        ${icon(svg`<path d="M8 6h15v11H8M15 17v4M11 21h8M1 4h6v5H1zM4 9v12"/>`, 17, 2)}
        ${icon(svg`<path d="M2 9h4l5-5v16l-5-5H2zM14 9q2 3 0 6M17 6q4 6 0 12M20 4q5 8 0 16"/>`, 17, 1.7)}
        <span>ENG</span>
        <div class="clock">16:22<br />02.09.2024</div>
        <button aria-label="Notifications">
          <svg width="26" height="26" viewBox="0 0 26 26">
            <path d="M1 2h16v13H9l-4 4v-4H1z" fill="#fff" />
            <path d="M4 6h10M4 9h10M4 12h7" stroke="#1e1e1e" />
            <circle cx="17" cy="18" r="7.500" fill="#3a3a3a" stroke="#9a9a9a" />
            <text x="17" y="22" text-anchor="middle" font-size="11" fill="#fff">1</text>
          </svg>
        </button>
        <span class="edge"></span>
      </div>
    `;
  }
}

@customElement("app-root")
export class AppRoot extends LitElement {
  @state() private view = "Strategy";
  static styles = [
    base,
    css`
      :host {
        display: flex;
        flex-direction: column;
        min-height: 100vh;
        background: #14171e;
      }
      main {
        flex: 1;
        display: grid;
        grid-template-columns: minmax(0, 1820fr) minmax(0, 717fr);
        gap: 7px;
        padding: 8px;
      }
      .left {
        display: flex;
        flex-direction: column;
        min-width: 0;
      }
      .board {
        flex: 1;
        display: flex;
        background: #1d1f28;
        padding: 8px 19px 17px 9px;
      }
      .tools {
        width: 33px;
        display: flex;
        flex-direction: column;
        gap: 7px;
      }
      .slot {
        display: flex;
        align-items: center;
      }
      .tail {
        width: 3px;
        height: 22px;
        border: 1px solid #3c3c40;
        border-left: 0;
        border-radius: 0 2px 2px 0;
      }
      .off {
        display: flex;
        align-items: baseline;
        justify-content: center;
        font-size: 14px;
        line-height: 22px;
        font-weight: 500;
      }
      .off .big {
        font-size: 20px;
      }
      .center {
        flex: 1;
        min-width: 0;
        display: flex;
        flex-direction: column;
        padding-top: 1px;
      }
      .actions {
        display: grid;
        grid-template-columns: repeat(4, minmax(0, 1fr));
        margin: 7px 0 5px;
        border-radius: 2px;
        overflow: hidden;
      }
      .action {
        height: 62px;
        padding: 5px;
        font-size: 15px;
        line-height: 26px;
        text-shadow: 1px 1px 1px #222;
        text-align: left;
      }
      .pair {
        display: flex;
        justify-content: space-between;
      }
      .dim {
        opacity: 0.7;
      }
      .total {
        height: 5px;
        border-radius: 2px;
      }
      range-stats {
        margin: 0 0 0 17px;
      }
      .tabs {
        display: flex;
        gap: 4px;
        height: 36px;
        font-size: 14px;
      }
      .page {
        padding: 0 16px;
        background: #171920;
      }
      .page.on {
        background: #1d1f28;
        color: #3ddc84;
      }
      .views {
        margin-left: auto;
        background: #1d1f28;
        display: flex;
        align-items: center;
        gap: 2px;
        padding: 0 8px;
      }
      .view {
        height: 22px;
        padding: 0 16px;
        border-radius: 2px;
        display: flex;
        align-items: center;
        gap: 8px;
      }
      .view.on {
        background: #213a37;
      }
      .players {
        display: flex;
        gap: 6px;
        margin-top: 8px;
        padding-bottom: 16px;
      }
      .rail {
        width: 40px;
        margin-right: 6px;
        padding: 8px;
        background: #1d1f28;
        display: flex;
        flex-direction: column;
        gap: 8px;
        font-size: 14px;
        height: 184px;
      }
      player-card {
        margin-top: 2px;
      }
    `,
  ];

  render() {
    const actions: [string, string, string, string][] = [
      ["Fold", "71.53%", "948.47", "r"],
      ["Call", "11.98%", "158.85", "o"],
      ["Raise 3.38x", "5.65%", "74.93", "t"],
      ["Raise 12.50x (All in)", "10.84%", "143.75", "g"],
    ];
    const tool = (label: string, g: unknown, tail = true) => html`<div class="slot">
      <button class="tool" aria-label=${label}>${icon(g, 18, 2)}</button>${tail ? html`<span class="tail"></span>` : nothing}
    </div>`;
    const help = icon(I.help, 14, 2);
    return html`
      <browser-bar></browser-bar>
      <site-header></site-header>
      <main>
        <section class="left">
          <div class="board">
            <div class="tools">
              ${tool("Suits", I.spade)}${tool("Copy", I.copy)}${tool("Compare", I.carousel, false)}${tool("Notes", I.comment)}
              ${tool("Layout", I.half)}
              <div class="slot">
                <button class="tool off"><span class="big">0</span>ff</button><span class="tail"></span>
              </div>
              ${tool("Clear notes", I.commentMinus, false)}
            </div>
            <div class="center">
              <hand-matrix></hand-matrix>
              <div class="actions">
                ${actions.map(
                  ([n, p, c, k]) => html`<button class="action" style=${styleMap({ background: COLORS[k] })}>
                    <div>${n}</div>
                    <div class="pair"><span>${p}</span><span class="dim">combos: ${c}</span></div>
                  </button>`,
                )}
              </div>
              <div
                class="total"
                style=${styleMap({ background: mixGradient([["r", 71.53], ["o", 11.98], ["t", 5.65], ["g", 10.84]]) })}
              ></div>
            </div>
            <range-stats></range-stats>
          </div>
          <div class="tabs">
            <button class="page on">One player</button><button class="page">Two players</button
            ><button class="page">Reports</button>
            <div class="views">
              ${["Strategy", "Range", "EV", "Equity", "EqR", "ΔEV"].map(
                (v) => html`<button class=${classMap({ view: true, on: v === this.view })} @click=${() => (this.view = v)}>
                  ${v}${v === "EqR" || v === "ΔEV" ? help : nothing}
                </button>`,
              )}
            </div>
          </div>
          <div class="players">
            <div class="rail">
              <button class="tool">%</button>
              <button class="tool" aria-label="Hide">${icon(I.eyeOff, 18, 2)}</button>
              <button class="tool" aria-label="Library">${icon(I.book, 17, 2)}</button>
              <button class="tool" aria-label="Hands">${icon(I.cards, 18, 2)}</button>
            </div>
            ${PLAYERS.map(
              (p) => html`<player-card .player=${p} ?current=${p.name === "SB"} ?pending=${p.name === "BB"}></player-card>`,
            )}
          </div>
        </section>
        <side-panel></side-panel>
      </main>
      <task-bar></task-bar>
    `;
  }
}
